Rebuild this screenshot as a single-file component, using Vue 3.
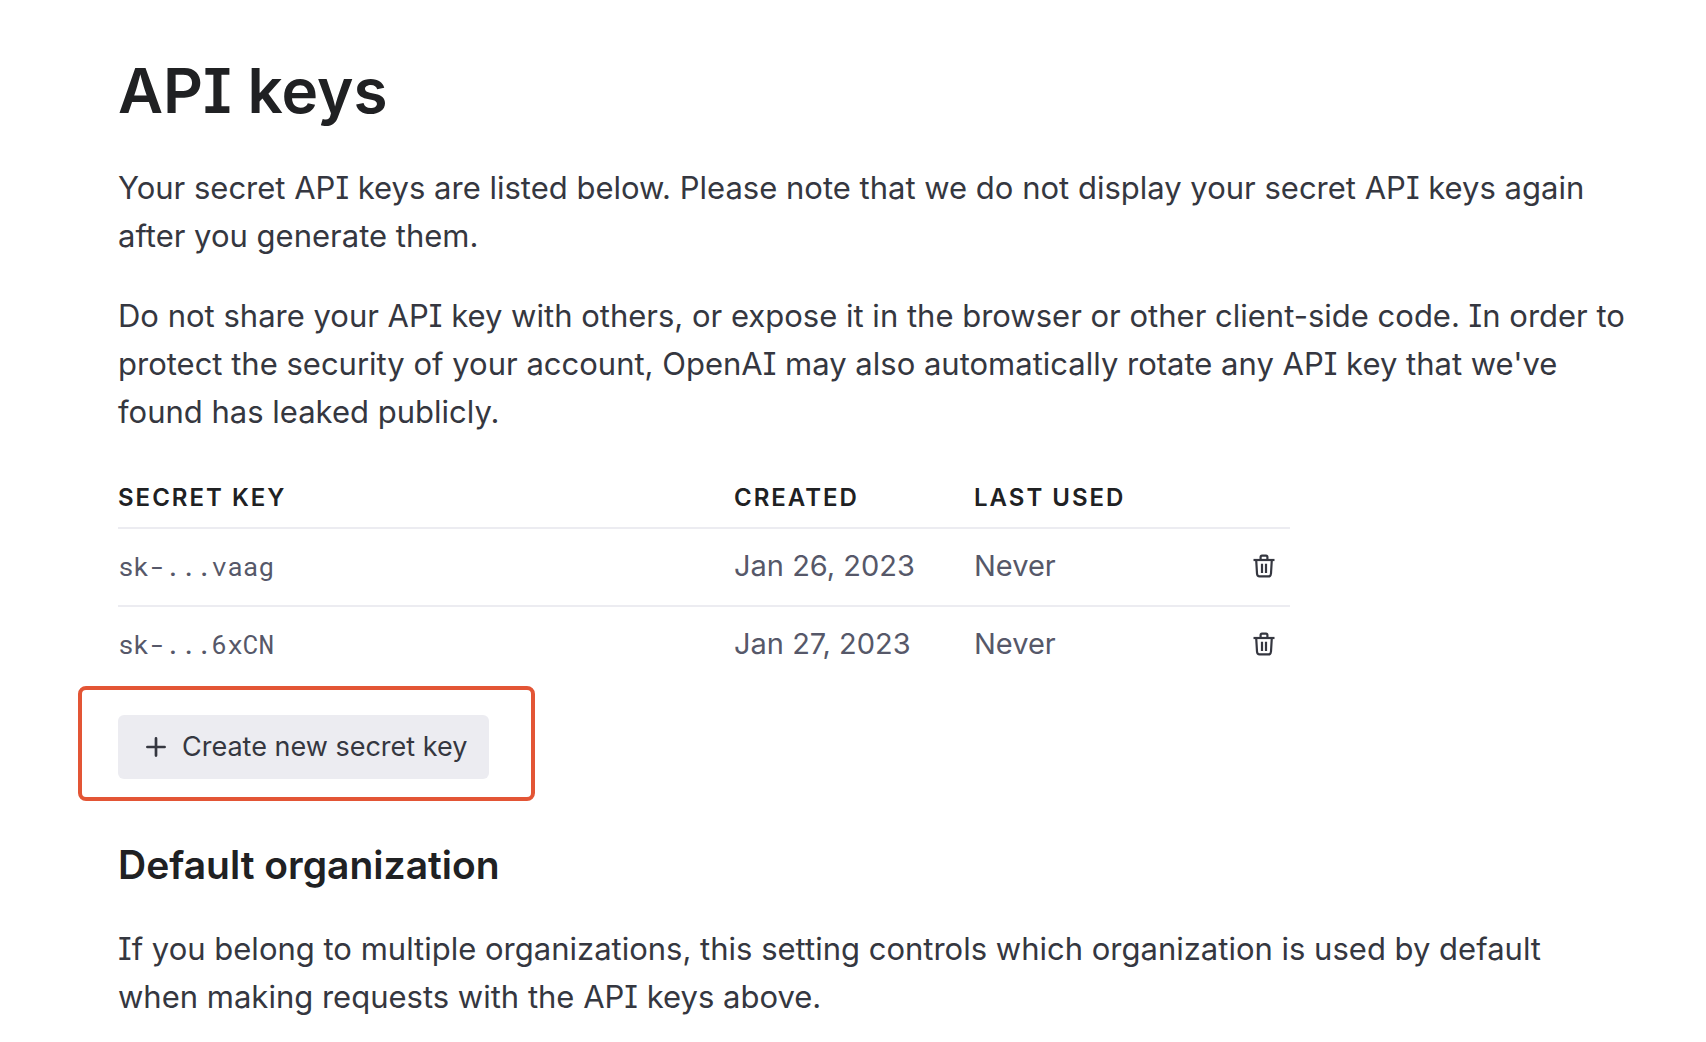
<script setup>
const keys = [
  { secret: 'sk-...vaag', created: 'Jan 26, 2023', lastUsed: 'Never' },
  { secret: 'sk-...6xCN', created: 'Jan 27, 2023', lastUsed: 'Never' },
]
</script>

<template>
  <main class="page">
    <h1>API keys</h1>
    <p>
      Your secret API keys are listed below. Please note that we do not display your secret API keys
      again after you generate them.
    </p>
    <p>
      Do not share your API key with others, or expose it in the browser or other client-side code.
      In order to protect the security of your account, OpenAI may also automatically rotate any API
      key that we've found has leaked publicly.
    </p>

    <table class="keys">
      <colgroup>
        <col />
        <col class="col-created" />
        <col class="col-used" />
        <col class="col-actions" />
      </colgroup>
      <thead>
        <tr>
          <th scope="col">SECRET KEY</th>
          <th scope="col">CREATED</th>
          <th scope="col">LAST USED</th>
          <td></td>
        </tr>
      </thead>
      <tbody>
        <tr v-for="key in keys" :key="key.secret">
          <td class="secret">{{ key.secret }}</td>
          <td>{{ key.created }}</td>
          <td>{{ key.lastUsed }}</td>
          <td>
            <button type="button" class="delete" aria-label="Delete key">
              <svg width="22" height="24" viewBox="0 0 22 24" fill="none" stroke="currentColor" stroke-width="2.2">
                <path d="M0.5 6H21.5" />
                <path d="M7.600 6V3Q7.600 1.600 9 1.600H13Q14.400 1.600 14.400 3V6" />
                <path d="M3.200 6L4 19.500Q4.200 22.400 6.600 22.400H15.400Q17.800 22.400 18 19.500L18.800 6" />
                <path d="M9 9.800V19M13 9.800V19" />
              </svg>
            </button>
          </td>
        </tr>
      </tbody>
    </table>

    <div class="highlight">
      <button type="button" class="create">
        <svg width="20" height="20" viewBox="0 0 20 20" fill="none" stroke="currentColor" stroke-width="2.7" stroke-linecap="round">
          <path d="M10 1.400V18.600M1.400 10H18.600" />
        </svg>
        Create new secret key
      </button>
    </div>

    <h2>Default organization</h2>
    <p>
      If you belong to multiple organizations, this setting controls which organization is used by
      default when making requests with the API keys above.
    </p>
  </main>
</template>

<style>
body {
  margin: 0;
  background: #fff;
}
</style>

<style scoped>
.page {
  padding: 58px 80px 0 118px;
  color: #353740;
  font-family: Inter, 'Liberation Sans', sans-serif;
  font-size: 31px;
  line-height: 48px;
  font-feature-settings: 'cv08';
}

h1,
h2 {
  margin: 0;
  color: #202123;
  font-weight: 600;
}

h1 {
  margin-bottom: 40px;
  font-size: 62px;
  line-height: 66px;
}

h2 {
  margin: 40px 0 36px;
  font-size: 39px;
  line-height: 48px;
}

p {
  margin: 0 0 32px;
}

.keys {
  width: 100%;
  max-width: 1172px;
  table-layout: fixed;
  border-collapse: separate;
  border-spacing: 0;
}

.col-created,
.col-used {
  width: 240px;
}

.col-actions {
  width: 76px;
}

th,
td {
  padding: 0;
  text-align: left;
}

th {
  padding: 14px 0 13px;
  color: #202123;
  font-size: 24px;
  font-weight: 600;
  line-height: 32px;
  letter-spacing: 2px;
}

tbody td {
  height: 74px;
  padding-bottom: 2px;
  border-top: 2px solid #ececf1;
  color: #565869;
  font-size: 29px;
}

tbody .secret {
  font-family: 'Roboto Mono', 'Noto Sans Mono', monospace;
  font-size: 26px;
}

.delete {
  display: flex;
  margin-left: auto;
  padding: 0 15px;
  border: 0;
  background: none;
  color: #353740;
}

.highlight {
  width: fit-content;
  margin: 3px 0 0 -40px;
  padding: 25px 42px 18px 36px;
  border: 4px solid #e35535;
  border-radius: 8px;
}

.create {
  display: flex;
  align-items: center;
  gap: 16px;
  padding: 0 22px 0 28px;
  border: 0;
  border-radius: 6px;
  background: #ececf1;
  color: #353740;
  font-family: inherit;
  font-size: 27px;
  line-height: 64px;
}
</style>
